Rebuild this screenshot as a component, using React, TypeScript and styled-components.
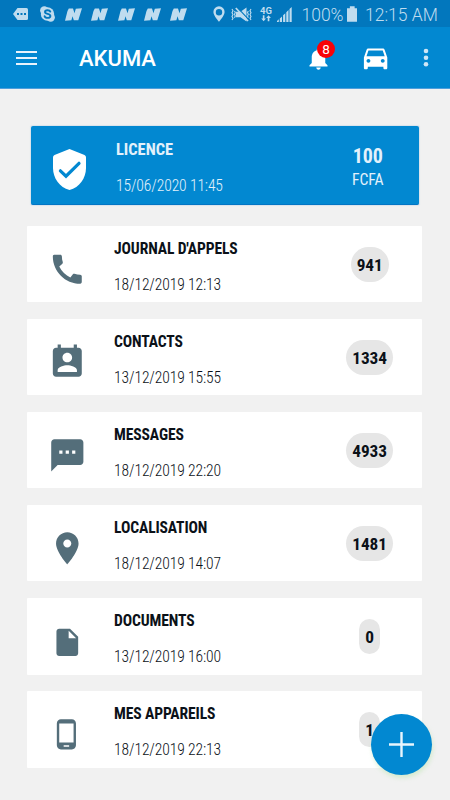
import React from 'react';
import styled, { createGlobalStyle } from 'styled-components';

const Global = createGlobalStyle`
  * { box-sizing: border-box; }
  body { margin: 0; background: #f1f1f1; }
`;

const condensed = `font-family: 'Roboto Condensed', Roboto, sans-serif; font-stretch: 75%;`;

const Screen = styled.div`
  position: relative;
  width: 450px;
  height: 800px;
  overflow: hidden;
  background: #f1f1f1;
  color: #0b1118;
  font-family: Roboto, sans-serif;
`;

const StatusBar = styled.header`
  display: flex;
  align-items: center;
  height: 27px;
  padding: 1px 12px 0 13px;
  background: #0277bd;
  color: #bfdcef;
`;

const Glyph = styled.svg<{ $gap?: number }>`
  display: block;
  flex: none;
  margin-left: ${p => p.$gap ?? 0}px;
`;

const StatusText = styled.span<{ $gap: number; $width: number }>`
  flex: none;
  width: ${p => p.$width}px;
  margin-left: ${p => p.$gap}px;
  padding-top: 2px;
  font-size: 17.5px;
  line-height: 25px;
  font-weight: 300;
  white-space: nowrap;
`;

const Network = styled.div`
  display: flex;
  flex: none;
  flex-direction: column;
  align-items: center;
  width: 12px;
  margin-left: 8px;
  font-size: 9.5px;
  line-height: 9px;
  font-weight: 700;
`;

const AppBar = styled.nav`
  display: flex;
  align-items: center;
  height: 62px;
  padding: 0 21px 0 16px;
  background: #0288d1;
  border-bottom: 1px solid #4f9fdc;
  color: #fff;
`;

const AppTitle = styled.h1`
  flex: 1;
  margin: 3px 0 0 42px;
  font-size: 22px;
  line-height: 28px;
  font-weight: 500;
`;

const Bell = styled.div`
  position: relative;
  width: 27px;
  height: 27px;
  margin: 2px 28.5px 0 0;
`;

const BellCount = styled.span`
  position: absolute;
  left: 12.3px;
  top: -5px;
  width: 18px;
  height: 18px;
  border-radius: 50%;
  background: #f80206;
  font-size: 13.5px;
  line-height: 18px;
  text-align: center;
`;

const Licence = styled.section`
  display: flex;
  width: 388px;
  height: 79px;
  margin: 37px 0 0 31px;
  border-radius: 2px;
  background: #0288d1;
  border-bottom: 1px solid #0275c4;
  box-shadow: 0 0 1px 1px #d9e3ec;
  color: #e3f1fb;
`;

const List = styled.main`
  display: flex;
  flex-direction: column;
  gap: 16.9px;
  margin: 21px 0 0 27.4px;
  width: 395px;
`;

const Row = styled.article`
  display: flex;
  height: 76.2px;
  background: #fff;
  border-radius: 1px;
`;

const IconCell = styled.div<{ $width: number; $top: number }>`
  display: flex;
  flex: none;
  justify-content: center;
  align-items: center;
  width: ${p => p.$width}px;
  height: 79px;
  padding-top: ${p => p.$top}px;
  color: #546e7a;
`;

const Body = styled.div<{ $left: number; $top: number }>`
  flex: 1;
  padding: ${p => p.$top}px 0 0 ${p => p.$left}px;
  ${condensed}
  white-space: nowrap;
`;

const Title = styled.h2<{ $size: number; $spacing?: number }>`
  margin: 0;
  font-size: ${p => p.$size}px;
  line-height: 20px;
  font-weight: 700;
  letter-spacing: ${p => p.$spacing ?? 0}px;
`;

const Stamp = styled.p<{ $top: number }>`
  margin: ${p => p.$top}px 0 0;
  font-size: 15.6px;
  line-height: 20px;
  font-weight: 350;
  letter-spacing: -0.12px;
`;

const CountCell = styled.div`
  display: flex;
  justify-content: center;
  width: 105.6px;
  padding-top: 20.5px;
`;

const Count = styled.span`
  height: 35px;
  padding: 0 6px;
  border-radius: 17.5px;
  background: #e6e6e6;
  ${condensed}
  font-size: 17.3px;
  line-height: 36px;
  font-weight: 700;
  letter-spacing: -0.1px;
`;

const Amount = styled.div`
  width: 102.5px;
  padding-top: 19px;
  text-align: center;
  ${condensed}
  font-size: 15.7px;
  line-height: 23.5px;
  letter-spacing: -0.1px;
`;

const AmountValue = styled.strong`
  display: block;
  font-size: 20px;
  font-weight: 700;
  line-height: 23px;
`;

const AddButton = styled.button`
  position: absolute;
  left: 371px;
  top: 714px;
  display: grid;
  place-items: center;
  width: 61px;
  height: 61px;
  padding: 0;
  border: 0;
  border-radius: 50%;
  background: #0288d1;
  box-shadow: 1px 3px 4px rgba(195, 232, 185, 0.6);
`;

const PHONE = 'M20.01 15.38c-1.23 0-2.42-.2-3.53-.56-.35-.12-.74-.03-1.01.24l-1.57 1.97c-2.83-1.35-5.48-3.9-6.89-6.83l1.95-1.66c.27-.28.35-.67.24-1.02-.37-1.11-.56-2.3-.56-3.53 0-.54-.45-.99-.99-.99H4.19C3.65 3 3 3.24 3 3.99 3 13.28 10.73 21 20.01 21c.71 0 .99-.63.99-1.18v-3.45c0-.54-.45-.99-.99-.99z';
const CONTACT = 'M19 3h-1V1h-2v2H8V1H6v2H5c-1.11 0-2 .9-2 2v14c0 1.1.89 2 2 2h14c1.1 0 2-.9 2-2V5c0-1.1-.9-2-2-2zm-7 3c1.66 0 3 1.34 3 3s-1.34 3-3 3-3-1.34-3-3 1.34-3 3-3zm6 12H6v-1c0-2 4-3.1 6-3.1s6 1.1 6 3.1v1z';
const SMS = 'M20 2H4c-1.1 0-2 .9-2 2v18l4-4h14c1.1 0 2-.9 2-2V4c0-1.1-.9-2-2-2zM9 11H7V9h2v2zm4 0h-2V9h2v2zm4 0h-2V9h2v2z';
const PLACE = 'M12 2C8.13 2 5 5.13 5 9c0 5.25 7 13 7 13s7-7.75 7-13c0-3.87-3.13-7-7-7zm0 9.5c-1.38 0-2.5-1.12-2.5-2.5s1.12-2.5 2.5-2.5 2.5 1.12 2.5 2.5-1.12 2.5-2.5 2.5z';
const FILE = 'M6 2c-1.1 0-1.99.9-1.99 2L4 20c0 1.1.89 2 1.99 2H18c1.1 0 2-.9 2-2V8l-6-6H6zm7 7V3.5L18.5 9H13z';
const MOBILE = 'M16 1H8C6.34 1 5 2.34 5 4v16c0 1.66 1.34 3 3 3h8c1.66 0 3-1.34 3-3V4c0-1.66-1.34-3-3-3zm-2 20h-4v-1h4v1zm3.25-3H6.75V4h10.5v14z';
const BELL = 'M12 22c1.1 0 2-.9 2-2h-4c0 1.1.89 2 2 2zm6-6v-5c0-3.07-1.64-5.64-4.5-6.32V4c0-.83-.67-1.5-1.5-1.5s-1.5.67-1.5 1.5v.68C7.63 5.36 6 7.92 6 11v5l-2 2v1h16v-1l-2-2z';
const CAR = 'M18.92 5.01C18.72 4.42 18.16 4 17.5 4h-11c-.66 0-1.21.42-1.42 1.01L3 11v8c0 .55.45 1 1 1h1c.55 0 1-.45 1-1v-1h12v1c0 .55.45 1 1 1h1c.55 0 1-.45 1-1v-8l-2.08-5.99zM6.5 15c-.83 0-1.5-.67-1.5-1.5S5.67 12 6.5 12s1.5.67 1.5 1.5S7.33 15 6.5 15zm11 0c-.83 0-1.5-.67-1.5-1.5s.67-1.5 1.5-1.5 1.5.67 1.5 1.5-.67 1.5-1.5 1.5zM5 10l1.5-4.5h11L19 10H5z';

const rows = [
  { title: "JOURNAL D'APPELS", date: '18/12/2019 12:13', count: 941, path: PHONE, size: 38.6 },
  { title: 'CONTACTS', date: '13/12/2019 15:55', count: 1334, path: CONTACT, size: 38.6 },
  { title: 'MESSAGES', date: '18/12/2019 22:20', count: 4933, path: SMS, size: 38.6 },
  { title: 'LOCALISATION', date: '18/12/2019 14:07', count: 1481, path: PLACE, size: 38.6 },
  { title: 'DOCUMENTS', date: '13/12/2019 16:00', count: 0, path: FILE, size: 32.6 },
  { title: 'MES APPAREILS', date: '18/12/2019 22:13', count: 1, path: MOBILE, size: 32.8 },
];

const Material = ({ path, size }: { path: string; size: number }) => (
  <Glyph width={size} height={size} viewBox="0 0 24 24" fill="currentColor"><path d={path} /></Glyph>
);

const NewsMark = ({ gap }: { gap: number }) => (
  <Glyph $gap={gap} width="17" height="13" viewBox="0 0 17 13" fill="currentColor">
    <path d="M3.8.5H8l1.5 4.7L10.8.8 17 .2 13.3 12.3H8.8L7.5 8.3 6.4 12.3 0 12.8 2.5 3z" />
  </Glyph>
);

const StatusIcons = () => (
  <>
    <Glyph width="15" height="12" viewBox="0 0 15 12">
      <path d="M4.5 0H13.5Q15 0 15 1.5V10.5Q15 12 13.5 12H4.5L0 6z" fill="currentColor" />
      <path d="M4 5h2v2H4zM7.5 5h2v2h-2zM11 5h2v2h-2z" fill="#0277bd" />
    </Glyph>
    <Glyph $gap={12} width="15" height="16" viewBox="0 0 15 16">
      <circle cx="7.5" cy="8" r="6.7" fill="currentColor" />
      <circle cx="4.3" cy="4.5" r="4.2" fill="currentColor" />
      <circle cx="10.7" cy="11.5" r="4.2" fill="currentColor" />
      <path d="M10.3 5.6C9.6 3.8 5 3.7 5 6.1C5 8.5 10.4 7.4 10.4 10C10.4 12.5 5.2 12.4 4.6 10.2" fill="none" stroke="#0277bd" strokeWidth="1.9" strokeLinecap="round" />
    </Glyph>
    <NewsMark gap={10} />
    {[0, 1, 2, 3].map(i => <NewsMark key={i} gap={9.3} />)}
    <Glyph $gap={25.8} width="12" height="16" viewBox="0 0 12 16">
      <path fillRule="evenodd" fill="currentColor" d="M6 .3A5.6 5.6 0 0 0 .4 6C.4 9.7 6 15.7 6 15.7S11.6 9.7 11.6 6A5.6 5.6 0 0 0 6 .3zM6 3A3.2 3.2 0 1 1 6 9.4A3.2 3.2 0 1 1 6 3z" />
    </Glyph>
    <Glyph $gap={6} width="21" height="15" viewBox="0 0 21 15">
      <path d="M5 4.8H9.5L15.5 .5V14.5L9.5 10.2H5z" fill="currentColor" />
      <path d="M6.2 .4L17.5 12.4" stroke="#0277bd" strokeWidth="1.2" />
      <path d="M4.8 1L17 14" stroke="currentColor" strokeWidth="1.7" />
      <path d="M1 2l1 1.8L1 5.7l1 1.8-1 1.9 1 1.8-1 1.8M3.5 4l.8 1.5-.8 1.8.8 1.7-.8 1.8M17.3 4l-.8 1.5.8 1.8-.8 1.7.8 1.8M20 2l-1 1.8 1 1.9-1 1.8 1 1.9-1 1.8 1 1.8" stroke="currentColor" fill="none" strokeWidth="1.1" />
    </Glyph>
    <Network>
      4G
      <Glyph width="10" height="7" viewBox="0 0 11 7" fill="currentColor">
        <path d="M2 0h1.8v3.5H5.5L2.9 6.5.3 3.5H2zM8.3 0l2.6 3H9.2v3.5H7.4V3H5.7z" />
      </Glyph>
    </Network>
    <Glyph $gap={5} width="15" height="15" viewBox="0 0 15 15" fill="currentColor">
      <path d="M0 15V14L1.8 12.3V15zM2.8 15V11.5L5 9.5V15zM6.1 15V8.3L8.3 6.2V15zM9.3 15V5.2L11.5 3V15zM12.5 15V2L14.7 0V15z" />
    </Glyph>
  </>
);

export default function App() {
  return (
    <Screen>
      <Global />
      <StatusBar>
        <StatusIcons />
        <StatusText $gap={9.5} $width={42}>100%</StatusText>
        <Glyph $gap={3.5} width="10.5" height="16" viewBox="0 0 11 16" fill="currentColor">
          <path d="M3 0h5v2h3v14H0V2h3z" />
        </Glyph>
        <StatusText $gap={7.5} $width={73}>12:15 AM</StatusText>
      </StatusBar>
      <AppBar>
        <Glyph width="21" height="16" viewBox="0 0 21 16"><path d="M0 2h21M0 8h21M0 14h21" stroke="#e8f3fc" strokeWidth="2.2" /></Glyph>
        <AppTitle>AKUMA</AppTitle>
        <Bell>
          <Material path={BELL} size={27} />
          <BellCount>8</BellCount>
        </Bell>
        <Glyph width="31.2" height="31.2" viewBox="0 -1 24 24" fill="currentColor"><path d={CAR} /></Glyph>
        <Glyph $gap={31.5} width="6" height="19" viewBox="0 0 6 19" fill="#cfe6f6">
          <circle cx="3" cy="3" r="2.3" /><circle cx="3" cy="9.7" r="2.3" /><circle cx="3" cy="16.3" r="2.3" />
        </Glyph>
      </AppBar>
      <Licence>
        <IconCell $width={77} $top={8}>
          <Glyph width="33" height="41" viewBox="0 0 33 41">
            <path d="M16.5 0L31.5 6Q33 6.7 33 8.3V19C33 29 26.5 38.5 16.5 41C6.5 38.5 0 29 0 19V8.3Q0 6.7 1.5 6z" fill="#fff" />
            <path d="M7.4 21.8L13 27.2L26 14.3" fill="none" stroke="#0288d1" strokeWidth="3.2" strokeLinecap="round" />
          </Glyph>
        </IconCell>
        <Body $left={8} $top={14}>
          <Title $size={16.4}>LICENCE</Title>
          <Stamp $top={15.8}>15/06/2020 11:45</Stamp>
        </Body>
        <Amount><AmountValue>100</AmountValue>FCFA</Amount>
      </Licence>
      <List>
        {rows.map(r => (
          <Row key={r.title}>
            <IconCell $width={79} $top={8}><Material path={r.path} size={r.size} /></IconCell>
            <Body $left={7.7} $top={13}>
              <Title $size={15.6} $spacing={-0.13}>{r.title}</Title>
              <Stamp $top={15.7}>{r.date}</Stamp>
            </Body>
            <CountCell><Count>{r.count}</Count></CountCell>
          </Row>
        ))}
      </List>
      <AddButton aria-label="Ajouter">
        <Glyph width="25" height="25" viewBox="0 0 25 25"><path d="M12.5 0v25M0 12.5h25" stroke="#e8f5fd" strokeWidth="2.4" /></Glyph>
      </AddButton>
    </Screen>
  );
}
